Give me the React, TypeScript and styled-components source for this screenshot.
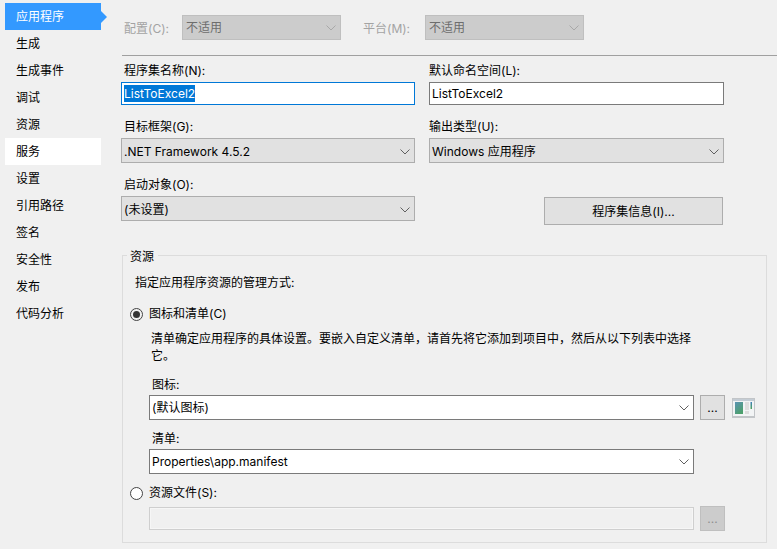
import React from 'react';
import styled, { createGlobalStyle } from 'styled-components';

const GlobalStyle = createGlobalStyle`
  html, body {
    margin: 0;
    padding: 0;
    background: #f0f0f0;
  }
  body {
    font-family: Inter, "Noto Sans CJK SC", sans-serif;
    font-size: 12px;
    color: #000;
  }
`;

const Page = styled.div`
  width: 777px;
  height: 549px;
  display: flex;
  overflow: hidden;
  background: #f0f0f0;
`;

const Sidebar = styled.nav`
  width: 121px;
  flex: none;
  box-sizing: border-box;
  padding: 3px 0 0 5px;
`;

const NavItem = styled.div<{ $active?: boolean; $hover?: boolean }>`
  position: relative;
  width: 96px;
  height: 27px;
  line-height: 27px;
  padding-left: 11px;
  box-sizing: border-box;
  background: ${(p) => (p.$active ? '#3399ff' : p.$hover ? '#fff' : 'transparent')};
  color: ${(p) => (p.$active ? '#fff' : '#000')};

  ${(p) =>
    p.$active &&
    `
    &::after {
      content: '';
      position: absolute;
      left: 96px;
      top: 8px;
      border-left: 6px solid #3399ff;
      border-top: 6px solid transparent;
      border-bottom: 6px solid transparent;
    }
  `}
`;

const Main = styled.main`
  flex: 1;
  min-width: 0;
`;

const ConfigBar = styled.div`
  display: flex;
  align-items: center;
  height: 25px;
  margin-top: 15px;
  padding-left: 3px;
`;

const ConfigLabel = styled.span<{ $width: number; $gap?: number }>`
  width: ${(p) => p.$width}px;
  margin-left: ${(p) => p.$gap ?? 0}px;
  color: #a3a3a3;
`;

const Divider = styled.div`
  height: 1px;
  margin: 15px 0 0 1px;
  background: #a0a0a0;
`;

const FieldGrid = styled.div`
  display: grid;
  grid-template-columns: 294px 295px;
  column-gap: 14px;
  row-gap: 13px;
  padding-top: 6px;
`;

const Label = styled.label<{ $indent?: number }>`
  display: block;
  height: 16px;
  line-height: 18px;
  margin-bottom: 4px;
  padding-left: ${(p) => p.$indent ?? 3}px;
`;

const TextBox = styled.div<{ $focused?: boolean }>`
  height: 23px;
  margin-top: 1px;
  box-sizing: border-box;
  padding-left: 2px;
  line-height: 21px;
  background: #fff;
  border: 1px solid ${(p) => (p.$focused ? '#0078d7' : '#7a7a7a')};
  white-space: nowrap;
`;

const Selected = styled.span`
  background: #0078d7;
  color: #fff;
  display: inline-block;
  height: 17px;
  line-height: 18px;
  vertical-align: top;
  margin-top: 2px;
`;

const ComboBox = styled.div<{ $variant?: 'flat' | 'white' | 'disabled'; $width?: number }>`
  display: flex;
  align-items: center;
  justify-content: space-between;
  height: 25px;
  line-height: 21px;
  width: ${(p) => (p.$width ? `${p.$width}px` : 'auto')};
  flex: none;
  box-sizing: border-box;
  padding: ${(p) =>
    p.$variant === 'disabled'
      ? '0 3px 0 3px'
      : p.$variant === 'white'
        ? '0 3px 0 2px'
        : '2px 3px 0 2px'};
  white-space: nowrap;
  background: ${(p) =>
    p.$variant === 'white' ? '#fff' : p.$variant === 'disabled' ? '#cccccc' : '#e1e1e1'};
  border: 1px solid
    ${(p) =>
      p.$variant === 'white' ? '#7a7a7a' : p.$variant === 'disabled' ? '#bfbfbf' : '#adadad'};
  color: ${(p) => (p.$variant === 'disabled' ? '#6d6d6d' : '#000')};
`;

const ChevronMark = styled.svg`
  flex: none;
  margin-right: 1px;
`;

const Chevron = ({ color }: { color: string }) => (
  <ChevronMark width="10" height="6" viewBox="0 0 10 6">
    <path d="M0.5 0.5 L5 5 L9.5 0.5" fill="none" stroke={color} strokeWidth="1" />
  </ChevronMark>
);

const Combo = ({
  value,
  variant,
  width,
}: {
  value: string;
  variant?: 'flat' | 'white' | 'disabled';
  width?: number;
}) => (
  <ComboBox $variant={variant} $width={width}>
    <span>{value}</span>
    <Chevron color={variant === 'disabled' ? '#a8a8a8' : '#606060'} />
  </ComboBox>
);

const InfoButton = styled.button`
  display: block;
  width: 179px;
  height: 28px;
  margin: 21px 0 0 115px;
  padding: 0 0 2px;
  background: #e1e1e1;
  border: 1px solid #adadad;
  font: inherit;
  color: #000;
`;

const Group = styled.fieldset`
  width: 645px;
  height: 296px;
  box-sizing: border-box;
  margin: 22px 0 0 1px;
  padding: 0 0 0 12px;
  border: 1px solid #dcdcdc;
  min-width: 0;
`;

const GroupTitle = styled.legend`
  height: 16px;
  line-height: 19px;
  padding: 0 4px 0 3px;
  margin-left: -8px;
`;

const Hint = styled.div`
  height: 16px;
  line-height: 18px;
  margin-top: 11px;
`;

const RadioRow = styled.div<{ $top: number }>`
  display: flex;
  align-items: center;
  gap: 6px;
  height: 16px;
  line-height: 18px;
  margin: ${(p) => p.$top}px 0 0 -5px;
`;

const RadioMark = styled.span<{ $checked?: boolean }>`
  position: relative;
  width: 13px;
  height: 13px;
  flex: none;
  box-sizing: border-box;
  border: 1px solid #444;
  border-radius: 50%;
  background: ${(p) => (p.$checked ? 'transparent' : '#fff')};

  ${(p) =>
    p.$checked &&
    `
    &::after {
      content: '';
      position: absolute;
      left: 2px;
      top: 2px;
      width: 7px;
      height: 7px;
      border-radius: 50%;
      background: #333;
    }
  `}
`;

const Description = styled.p`
  width: 545px;
  margin: 8px 0 0 16px;
  line-height: 17px;
`;

const Indented = styled.div`
  margin-left: 14px;
`;

const SubLabel = styled(Label)<{ $top: number }>`
  margin-top: ${(p) => p.$top}px;
  margin-bottom: 3px;
`;

const PickerRow = styled.div<{ $top?: number }>`
  display: flex;
  align-items: center;
  gap: 6px;
  margin-top: ${(p) => p.$top ?? 0}px;
`;

const DotsButton = styled.button<{ $disabled?: boolean }>`
  width: 25px;
  height: 25px;
  flex: none;
  padding: 0;
  background: ${(p) => (p.$disabled ? '#cccccc' : '#e1e1e1')};
  border: 1px solid ${(p) => (p.$disabled ? '#bfbfbf' : '#adadad')};
  color: ${(p) => (p.$disabled ? '#8f8f8f' : '#000')};
  font: inherit;
`;

const DisabledBox = styled.div`
  width: 545px;
  height: 23px;
  flex: none;
  box-sizing: border-box;
  background: #f0f0f0;
  border: 1px solid #cfcfcf;
  box-shadow: inset 0 0 0 1px #f6f6f6;
`;

const PreviewIcon = styled.svg`
  flex: none;
  margin-left: 1px;
`;

const IconPreview = () => (
  <PreviewIcon width="23" height="20" viewBox="0 0 23 20">
    <defs>
      <linearGradient id="pane" x1="0" y1="0" x2="0.6" y2="1">
        <stop offset="0" stopColor="#5b93b4" />
        <stop offset="1" stopColor="#4da06c" />
      </linearGradient>
      <linearGradient id="stripe" x1="0" y1="0" x2="0" y2="1">
        <stop offset="0" stopColor="#3d7fb8" />
        <stop offset="1" stopColor="#4fa35a" />
      </linearGradient>
    </defs>
    <rect x="0" y="0" width="23" height="20" fill="#c2c5c8" />
    <rect x="1" y="1" width="21" height="17" fill="#f2f4f5" />
    <rect x="1" y="1" width="21" height="2" fill="#c4ccd4" />
    <rect x="3" y="4" width="8" height="12" fill="url(#pane)" />
    <rect x="13" y="4" width="4" height="8" fill="#dedede" />
    <rect x="13" y="13" width="4" height="3" fill="#dcdcdc" />
    <rect x="18.5" y="4" width="1.5" height="7" fill="url(#stripe)" />
  </PreviewIcon>
);

const navItems = ['生成', '生成事件', '调试', '资源'];
const navItemsAfter = ['设置', '引用路径', '签名', '安全性', '发布', '代码分析'];

export default function App() {
  return (
    <Page>
      <GlobalStyle />
      <Sidebar>
        <NavItem $active>应用程序</NavItem>
        {navItems.map((item) => (
          <NavItem key={item}>{item}</NavItem>
        ))}
        <NavItem $hover>服务</NavItem>
        {navItemsAfter.map((item) => (
          <NavItem key={item}>{item}</NavItem>
        ))}
      </Sidebar>

      <Main>
        <ConfigBar>
          <ConfigLabel $width={58}>配置(C):</ConfigLabel>
          <Combo value="不适用" variant="disabled" width={159} />
          <ConfigLabel $width={62} $gap={22}>
            平台(M):
          </ConfigLabel>
          <Combo value="不适用" variant="disabled" width={159} />
        </ConfigBar>
        <Divider />

        <FieldGrid>
          <div>
            <Label>程序集名称(N):</Label>
            <TextBox $focused>
              <Selected>ListToExcel2</Selected>
            </TextBox>
          </div>
          <div>
            <Label $indent={0}>默认命名空间(L):</Label>
            <TextBox>ListToExcel2</TextBox>
          </div>
          <div>
            <Label>目标框架(G):</Label>
            <Combo value=".NET Framework 4.5.2" />
          </div>
          <div>
            <Label $indent={0}>输出类型(U):</Label>
            <Combo value="Windows 应用程序" />
          </div>
          <div>
            <Label>启动对象(O):</Label>
            <Combo value="(未设置)" />
          </div>
          <div>
            <InfoButton>程序集信息(I)...</InfoButton>
          </div>
        </FieldGrid>

        <Group>
          <GroupTitle>资源</GroupTitle>
          <Hint>指定应用程序资源的管理方式:</Hint>
          <RadioRow $top={16}>
            <RadioMark $checked />
            图标和清单(C)
          </RadioRow>
          <Description>
            清单确定应用程序的具体设置。要嵌入自定义清单，请首先将它添加到项目中，然后从以下列表中选择它。
          </Description>
          <Indented>
            <SubLabel $top={12}>图标:</SubLabel>
            <PickerRow>
              <Combo value="(默认图标)" variant="white" width={545} />
              <DotsButton>...</DotsButton>
              <IconPreview />
            </PickerRow>
            <SubLabel $top={10}>清单:</SubLabel>
            <Combo value="Properties\app.manifest" variant="white" width={545} />
          </Indented>
          <RadioRow $top={11}>
            <RadioMark />
            资源文件(S):
          </RadioRow>
          <Indented>
            <PickerRow $top={5}>
              <DisabledBox />
              <DotsButton $disabled>...</DotsButton>
            </PickerRow>
          </Indented>
        </Group>
      </Main>
    </Page>
  );
}
